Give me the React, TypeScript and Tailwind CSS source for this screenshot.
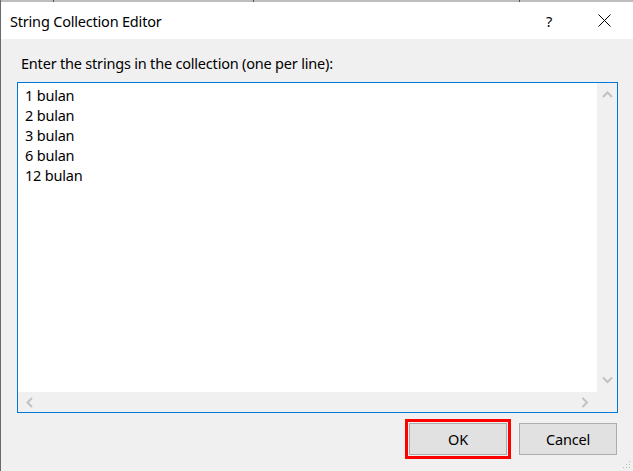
import React from 'react';

const lines = ['1 bulan', '2 bulan', '3 bulan', '6 bulan', '12 bulan'];

// small disabled scrollbar arrow
const Chevron = ({ dir }: { dir: 'up' | 'down' | 'left' | 'right' }) => {
  const d = {
    up: 'M1 6 L5.5 1.5 L10 6',
    down: 'M1 1.5 L5.5 6 L10 1.5',
    left: 'M6 1 L1.5 5.5 L6 10',
    right: 'M1.5 1 L6 5.5 L1.5 10',
  }[dir];
  const vert = dir === 'up' || dir === 'down';
  return (
    <svg width={vert ? 11 : 8} height={vert ? 8 : 11} viewBox={vert ? '0 0 11 8' : '0 0 8 11'}>
      <path d={d} fill="none" stroke="#c2c2c2" strokeWidth="2" />
    </svg>
  );
};

const App = (): JSX.Element => {
  return (
    <div
      className="relative w-[633px] h-[471px] overflow-hidden bg-[#f0f0f0] border-l border-[#6a6a6a] flex flex-col text-[14.5px] tracking-[-0.2px] text-black"
      style={{ fontFamily: '"Noto Sans", "Open Sans", sans-serif' }}
    >
      {/* strip of the window behind */}
      <div className="h-[2px] bg-[#bdbdbd] flex shrink-0">
        <div className="ml-[52px] w-px bg-[#505050]" />
        <div className="ml-[199px] w-px bg-[#505050]" />
        <div className="ml-[265px] w-px bg-[#505050]" />
      </div>

      {/* Title bar */}
      <div className="h-[37px] bg-white flex items-center shrink-0">
        <span className="ml-[9px] leading-5">String Collection Editor</span>
        <span className="ml-auto mr-[46px] leading-5">?</span>
        <svg width="13" height="13" viewBox="0 0 13 13" className="mr-[22px]">
          <path d="M0.5 0.5 L12.5 12.5 M12.5 0.5 L0.5 12.5" stroke="#000" strokeWidth="1" />
        </svg>
      </div>

      {/* Body */}
      <div className="flex flex-col pt-[14px]">
        <p className="ml-[20px] leading-5">Enter the strings in the collection (one per line):</p>

        {/* Text box */}
        <div className="ml-[16px] mt-[9px] w-[601px] h-[331px] border border-[#0078d7] grid grid-cols-[1fr_20px] grid-rows-[1fr_20px]">
          <div className="bg-white pl-[7px] pt-[2px]">
            {lines.map((l) => (
              <div key={l} className="leading-5">{l}</div>
            ))}
          </div>
          <div className="bg-[#f0f0f0] flex flex-col items-center justify-between py-[8px]">
            <Chevron dir="up" />
            <Chevron dir="down" />
          </div>
          <div className="bg-[#f0f0f0] flex items-center justify-between px-[8px]">
            <Chevron dir="left" />
            <Chevron dir="right" />
          </div>
          <div className="bg-[#f0f0f0]" />
        </div>

        {/* Buttons */}
        <div className="flex justify-end gap-[12px] mt-[10px] mr-[16px]">
          <button className="w-[98px] h-[32px] bg-[#e1e1e1] border border-[#adadad] outline-[3px] outline-solid outline-[#ff0000] outline-offset-1 leading-5">
            OK
          </button>
          <button className="w-[98px] h-[32px] bg-[#e1e1e1] border border-[#adadad] leading-5">
            Cancel
          </button>
        </div>
      </div>

      {/* resize grip */}
      <svg width="8" height="8" viewBox="0 0 8 8" className="absolute right-[2px] bottom-[2px]">
        <rect x="6" y="0" width="1" height="1" fill="#b8b8b8" />
        <rect x="3" y="3" width="1" height="1" fill="#b8b8b8" />
        <rect x="6" y="3" width="1" height="1" fill="#b8b8b8" />
        <rect x="0" y="6" width="1" height="1" fill="#b8b8b8" />
        <rect x="3" y="6" width="1" height="1" fill="#b8b8b8" />
        <rect x="6" y="6" width="1" height="1" fill="#b8b8b8" />
      </svg>
    </div>
  );
};

export default App;
